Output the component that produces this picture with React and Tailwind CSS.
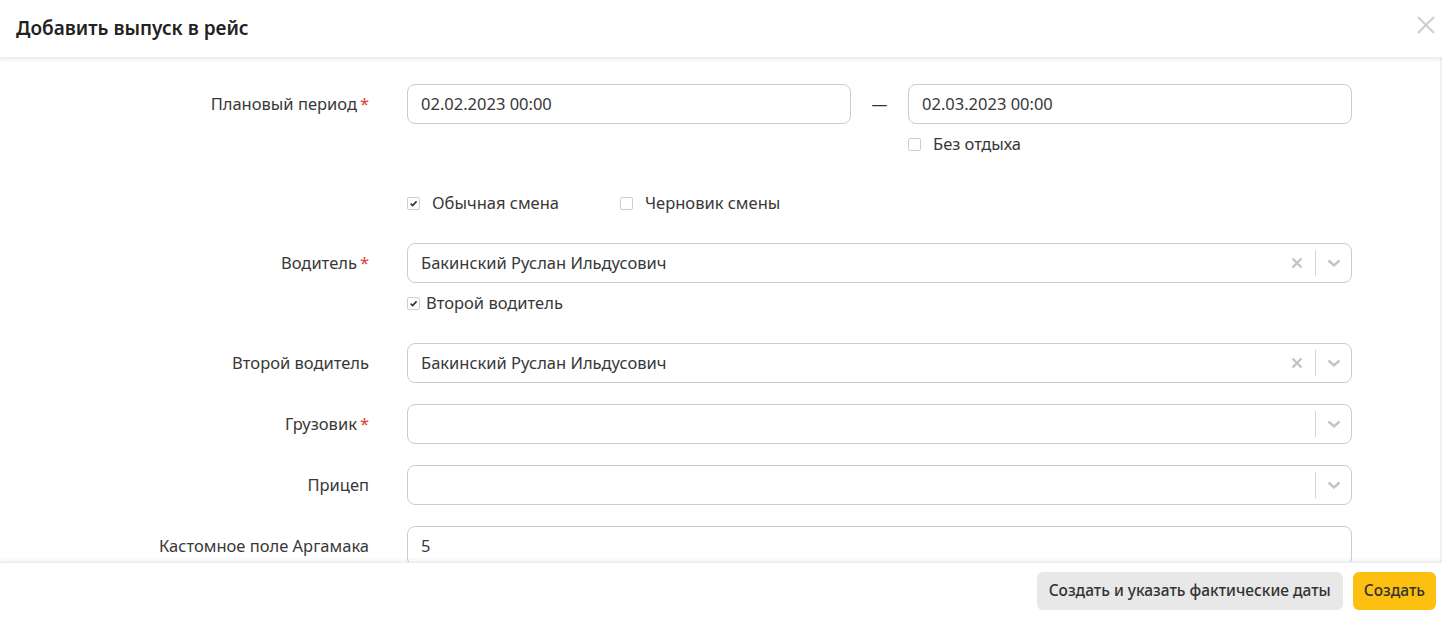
import React from 'react';

function Checkbox({ checked, label, gap = 'ml-[12px]' }) {
  return (
    <label className="flex items-center h-[20px] text-[16.5px] text-[#383838]">
      <span className="w-[13px] h-[13px] border border-[#cfcfcf] rounded-[2px] bg-white flex items-center justify-center shrink-0">
        {checked && (
          <svg width="9" height="9" viewBox="0 0 10 10">
            <path d="M1.8 5.2 L4 7.4 L8.4 2.6" fill="none" stroke="#333" strokeWidth="1.8" />
          </svg>
        )}
      </span>
      <span className={gap}>{label}</span>
    </label>
  );
}

function Label({ text, required }) {
  return (
    <div className="w-[369px] shrink-0 text-right text-[16.5px] text-[#383838]">
      {text}
      {required && <span className="text-[#e53935] ml-[3px]">*</span>}
    </div>
  );
}

function Input({ value, className = '' }) {
  return (
    <div className={`h-[40px] border border-[#cccccc] rounded-[8px] flex items-center px-[13px] text-[16.5px] text-[#383838] bg-white ${className}`}>
      {value}
    </div>
  );
}

function Select({ value, clearable }) {
  return (
    <div className="h-[40px] w-[945px] border border-[#cccccc] rounded-[8px] flex items-center bg-white">
      <div className="flex-1 px-[13px] text-[16.5px] text-[#383838]">{value}</div>
      {clearable && (
        <svg width="14" height="14" viewBox="0 0 14 14" className="mr-[11px]">
          <path d="M2.5 2.5 L11.5 11.5 M11.5 2.5 L2.5 11.5" stroke="#c4c4c4" strokeWidth="2.4" />
        </svg>
      )}
      <div className="w-px h-[26px] bg-[#d6d6d6]" />
      <div className="w-[35px] flex items-center justify-center">
        <svg width="16" height="16" viewBox="0 0 16 16">
          <path d="M2.5 5.5 L8 10.5 L13.5 5.5" fill="none" stroke="#c4c4c4" strokeWidth="2.4" />
        </svg>
      </div>
    </div>
  );
}

function Row({ children, className = '' }) {
  return <div className={`flex items-center ${className}`}>{children}</div>;
}

export default function App() {
  return (
    <div
      className="h-[618px] w-full flex flex-col bg-white overflow-hidden"
      style={{ fontFamily: '"Noto Sans", "Open Sans", sans-serif' }}
    >
      {/* Header */}
      <div className="h-[58px] shrink-0 flex items-center justify-between pl-[16px] pr-[6px] relative z-10 shadow-[0_2px_4px_rgba(0,0,0,0.07)] border-b border-[#ececec]">
        <h1 className="text-[19px] font-semibold text-[#222]">Добавить выпуск в рейс</h1>
        <svg width="20" height="20" viewBox="0 0 20 20" className="mb-[8px]">
          <path d="M2 2 L18 18 M18 2 L2 18" stroke="#d0d0d0" strokeWidth="2.4" />
        </svg>
      </div>

      {/* Body */}
      <div className="flex-1 flex overflow-hidden">
        <div className="flex-1 pt-[26px]">
          <Row>
            <Label text="Плановый период" required />
            <div className="ml-[38px] flex items-center">
              <Input value="02.02.2023 00:00" className="w-[444px]" />
              <div className="w-[57px] flex justify-center text-[16px] text-[#333]">—</div>
              <Input value="02.03.2023 00:00" className="w-[444px]" />
            </div>
          </Row>
          <div className="ml-[908px] mt-[10px]">
            <Checkbox label="Без отдыха" />
          </div>

          <div className="ml-[407px] mt-[39px] flex items-center">
            <Checkbox checked label="Обычная смена" />
            <div className="ml-[61px]">
              <Checkbox label="Черновик смены" />
            </div>
          </div>

          <Row className="mt-[30px]">
            <Label text="Водитель" required />
            <div className="ml-[38px]">
              <Select value="Бакинский Руслан Ильдусович" clearable />
            </div>
          </Row>
          <div className="ml-[407px] mt-[10px]">
            <Checkbox checked label="Второй водитель" gap="ml-[6px]" />
          </div>

          <Row className="mt-[30px]">
            <Label text="Второй водитель" />
            <div className="ml-[38px]">
              <Select value="Бакинский Руслан Ильдусович" clearable />
            </div>
          </Row>

          <Row className="mt-[21px]">
            <Label text="Грузовик" required />
            <div className="ml-[38px]">
              <Select value="" />
            </div>
          </Row>

          <Row className="mt-[21px]">
            <Label text="Прицеп" />
            <div className="ml-[38px]">
              <Select value="" />
            </div>
          </Row>

          <Row className="mt-[21px]">
            <Label text="Кастомное поле Аргамака" />
            <div className="ml-[38px]">
              <Input value="5" className="w-[945px]" />
            </div>
          </Row>
        </div>
        <div className="w-[2px] bg-[#f1f1f1]" />
      </div>

      {/* Footer */}
      <div className="h-[56px] shrink-0 flex items-center justify-end gap-[10px] pr-[6px] relative z-10 bg-white shadow-[0_-2px_4px_rgba(0,0,0,0.06)] border-t border-[#ececec]">
        <button className="h-[38px] px-[12px] rounded-[6px] bg-[#e8e8e8] text-[15.5px] font-medium text-[#333]">
          Создать и указать фактические даты
        </button>
        <button className="h-[38px] px-[11px] rounded-[6px] bg-[#fdc010] text-[15.5px] font-medium text-[#333]">
          Создать
        </button>
      </div>
    </div>
  );
}
